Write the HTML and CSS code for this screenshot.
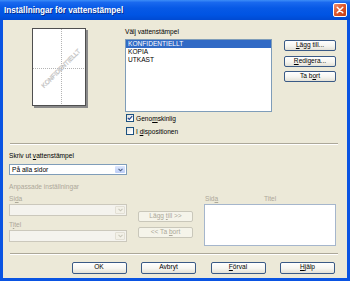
FILE: index.html
```html
<!DOCTYPE html>
<html lang="sv">
<head>
<meta charset="utf-8">
<title>Inställningar för vattenstämpel</title>
<link rel="stylesheet" href="styles.css">
</head>
<body>
<div class="window">
  <div class="titlebar">
    <span class="title">Inställningar för vattenstämpel</span>
    <span class="close"><svg width="8" height="8" viewBox="0 0 8 8"><path d="M1.2 1.2L6.8 6.8M6.8 1.2L1.2 6.8" stroke="#fff" stroke-width="1.5" stroke-linecap="round"/></svg></span>
  </div>
  <div class="client">
    <div class="top">
      <div class="preview">
        <svg class="page" viewBox="0 0 52 76">
          <line x1="28.5" y1="0" x2="28.5" y2="76" stroke="#b4b4b4" stroke-dasharray="1 1"/>
          <line x1="0" y1="39.5" x2="52" y2="39.5" stroke="#b4b4b4" stroke-dasharray="1 1"/>
          <text x="28" y="41.5" transform="rotate(-45 28 39.5)" text-anchor="middle" font-family="Liberation Sans, Arial, sans-serif" font-size="6.2" fill="#fff" stroke="#c4c4c4" stroke-width="0.45">KONFIDENTIELLT</text>
        </svg>
      </div>
      <div class="listcol">
        <div class="label">Välj vattenstämpel</div>
        <div class="listbox">
          <div class="item sel">KONFIDENTIELLT</div>
          <div class="item">KOPIA</div>
          <div class="item">UTKAST</div>
        </div>
        <div class="check first">
          <span class="cb"><svg width="6" height="6" viewBox="0 0 6 6"><path d="M0.8 2.8L2.3 4.3L5.2 1.2" fill="none" stroke="#21438a" stroke-width="1.2"/></svg></span>
          <span>Geno<u>m</u>skinlig</span>
        </div>
        <div class="check">
          <span class="cb"></span>
          <span>I <u>d</u>ispositionen</span>
        </div>
      </div>
      <div class="btncol">
        <button class="btn"><span><u>L</u>ägg till...</span></button>
        <button class="btn"><span><u>R</u>edigera...</span></button>
        <button class="btn"><span>Ta b<u>o</u>rt</span></button>
      </div>
    </div>

    <div class="sep"></div>

    <div class="print">
      <div class="label">Skriv ut <u>v</u>attenstämpel</div>
      <div class="combo">
        <span class="val">På alla sidor</span>
        <span class="arrow"><svg width="5" height="4" viewBox="0 0 5 4"><path d="M0.5 0.8L2.5 2.8L4.5 0.8" fill="none" stroke="#4d6185" stroke-width="1.1"/></svg></span>
      </div>
      <div class="label dim anp">Anpassade inställningar</div>
      <div class="lower">
        <div class="leftcol">
          <div class="label dim">Si<u>d</u>a</div>
          <div class="combo dis">
            <span class="val"></span>
            <span class="arrow"><svg width="5" height="4" viewBox="0 0 5 4"><path d="M0.5 0.8L2.5 2.8L4.5 0.8" fill="none" stroke="#c9c7ba" stroke-width="1.1"/></svg></span>
          </div>
          <div class="label dim titel">T<u>i</u>tel</div>
          <div class="combo dis">
            <span class="val"></span>
            <span class="arrow"><svg width="5" height="4" viewBox="0 0 5 4"><path d="M0.5 0.8L2.5 2.8L4.5 0.8" fill="none" stroke="#c9c7ba" stroke-width="1.1"/></svg></span>
          </div>
        </div>
        <div class="midcol">
          <button class="btn dis"><span>Lägg <u>t</u>ill &gt;&gt;</span></button>
          <button class="btn dis"><span>&lt;&lt; Ta <u>b</u>ort</span></button>
        </div>
        <div class="rightcol">
          <div class="heads"><span class="h1">Sid<u>a</u></span><span>Titel</span></div>
          <div class="list2"></div>
        </div>
      </div>
    </div>

    <div class="sep bottom"></div>

    <div class="footer">
      <button class="btn big"><span>OK</span></button>
      <button class="btn big"><span>Avbryt</span></button>
      <button class="btn big"><span><u>F</u>örval</span></button>
      <button class="btn big"><span><u>H</u>jälp</span></button>
    </div>
  </div>
</div>
</body>
</html>
```

FILE: styles.css
```css
* { box-sizing: border-box; }
html, body { margin: 0; padding: 0; }
body {
  width: 350px;
  height: 281px;
  overflow: hidden;
  font-family: "Liberation Sans", Arial, sans-serif;
  font-size: 6.6px;
  color: #000;
  background: #fff;
}
u { text-decoration-thickness: 0.6px; text-underline-offset: 0.8px; }

.window {
  width: 350px;
  height: 281px;
  display: flex;
  flex-direction: column;
  background: #0A54E2;
}
.titlebar {
  height: 20px;
  flex: none;
  display: flex;
  align-items: center;
  justify-content: space-between;
  padding: 0 3px 0 4px;
  background: linear-gradient(to bottom, #3D8DF7 0%, #1A69EF 12%, #0759E6 40%, #0054E3 75%, #004AD2 100%);
}
.title {
  color: #fff;
  font-weight: bold;
  font-size: 8.2px;
  text-shadow: 1px 1px 0 #0B2E8F;
  white-space: nowrap;
}
.close {
  width: 14px;
  height: 14px;
  border: 1px solid #fff;
  border-radius: 2px;
  background: linear-gradient(135deg, #EE8E6F 0%, #DD5429 50%, #C43F17 100%);
  display: flex;
  align-items: center;
  justify-content: center;
}

.client {
  flex: 1;
  margin: 0 3px 3px;
  background: #ECE9D8;
  display: flex;
  flex-direction: column;
}

.top {
  display: flex;
  align-items: flex-start;
  margin-top: 7px;
}
.preview { margin-left: 29px; margin-top: 1px; }
.page {
  display: block;
  width: 54px;
  height: 78px;
  background: #fff;
  border: 1px solid #4f4f4f;
  box-shadow: 2px 2px 0 #8a8a8a;
}

.label {
  height: 9px;
  line-height: 9px;
  white-space: nowrap;
}
.dim { color: #ACA899; }

.listcol { margin-left: 39px; width: 147px; }
.listbox {
  margin-top: 3px;
  height: 73px;
  background: #fff;
  border: 1px solid #7F9DB9;
}
.item {
  height: 8px;
  line-height: 8px;
  padding-left: 2px;
  white-space: nowrap;
}
.item.sel { background: #316AC5; color: #fff; }

.check {
  display: flex;
  align-items: center;
  height: 9px;
  margin-top: 4px;
  white-space: nowrap;
}
.check.first { margin-top: 1.5px; }
.cb {
  width: 8px;
  height: 8px;
  margin-left: 1px;
  margin-right: 2px;
  border: 1px solid #1C5180;
  background: linear-gradient(135deg, #DCDCD7 0%, #FFFFFF 80%);
  display: flex;
  align-items: center;
  justify-content: center;
}

.btncol {
  margin-left: 12px;
  margin-top: 13px;
  width: 52px;
  display: flex;
  flex-direction: column;
  gap: 4.5px;
}
.btn {
  height: 11px;
  width: 100%;
  padding: 0;
  margin: 0;
  border: 1px solid #3A5A86;
  border-radius: 2px;
  background: linear-gradient(to bottom, #FFFFFF 0%, #F6F5F0 55%, #E3E1D7 100%);
  font: inherit;
  color: #000;
  display: flex;
  align-items: center;
  justify-content: center;
  line-height: 1;
  white-space: nowrap;
}
.btn.dis {
  border-color: #C9C7BA;
  background: #F5F4EA;
  color: #ACA899;
}

.sep {
  height: 2px;
  flex: none;
  border-top: 1px solid #ACA899;
  border-bottom: 1px solid #fff;
  margin: 7.5px 9px 0 7px;
}
.sep.bottom { margin-top: 7px; }

.print {
  padding-left: 6px;
  display: flex;
  flex-direction: column;
}
.print > .label:first-child { margin-top: 6px; }

.combo {
  width: 118px;
  height: 11px;
  margin-top: 4px;
  border: 1px solid #7F9DB9;
  background: #fff;
  display: flex;
  align-items: stretch;
}
.combo .val {
  flex: 1;
  padding-left: 2px;
  line-height: 9px;
  white-space: nowrap;
}
.combo .arrow {
  width: 10px;
  margin: 1px;
  border-radius: 1px;
  background: linear-gradient(to bottom, #DCE6FD 0%, #BCCDF6 100%);
  display: flex;
  align-items: center;
  justify-content: center;
}
.combo.dis {
  height: 12px;
  margin-top: 1px;
  border-color: #CBC8BC;
  background: #F4F3EE;
}
.combo.dis .arrow {
  background: #F3F1E8;
  border: 1px solid #E2DFD4;
}
.anp { margin-top: 6.5px; }

.lower { display: flex; margin-top: 3px; }
.leftcol { width: 118px; }
.titel { margin-top: 4px; }
.midcol {
  margin-left: 11px;
  width: 55px;
  margin-top: 17px;
  display: flex;
  flex-direction: column;
  gap: 5px;
}
.rightcol { margin-left: 11px; width: 132px; }
.heads {
  display: flex;
  height: 9px;
  line-height: 9px;
  color: #ACA899;
  white-space: nowrap;
}
.heads .h1 { width: 60px; padding-left: 1px; }
.list2 {
  margin-top: 1px;
  height: 42px;
  border: 1px solid #A5B6CC;
  background: #fff;
}

.footer {
  display: flex;
  justify-content: flex-end;
  gap: 14.5px;
  margin-top: 7px;
  padding-right: 12px;
}
.btn.big { width: 55px; height: 12px; }
```
